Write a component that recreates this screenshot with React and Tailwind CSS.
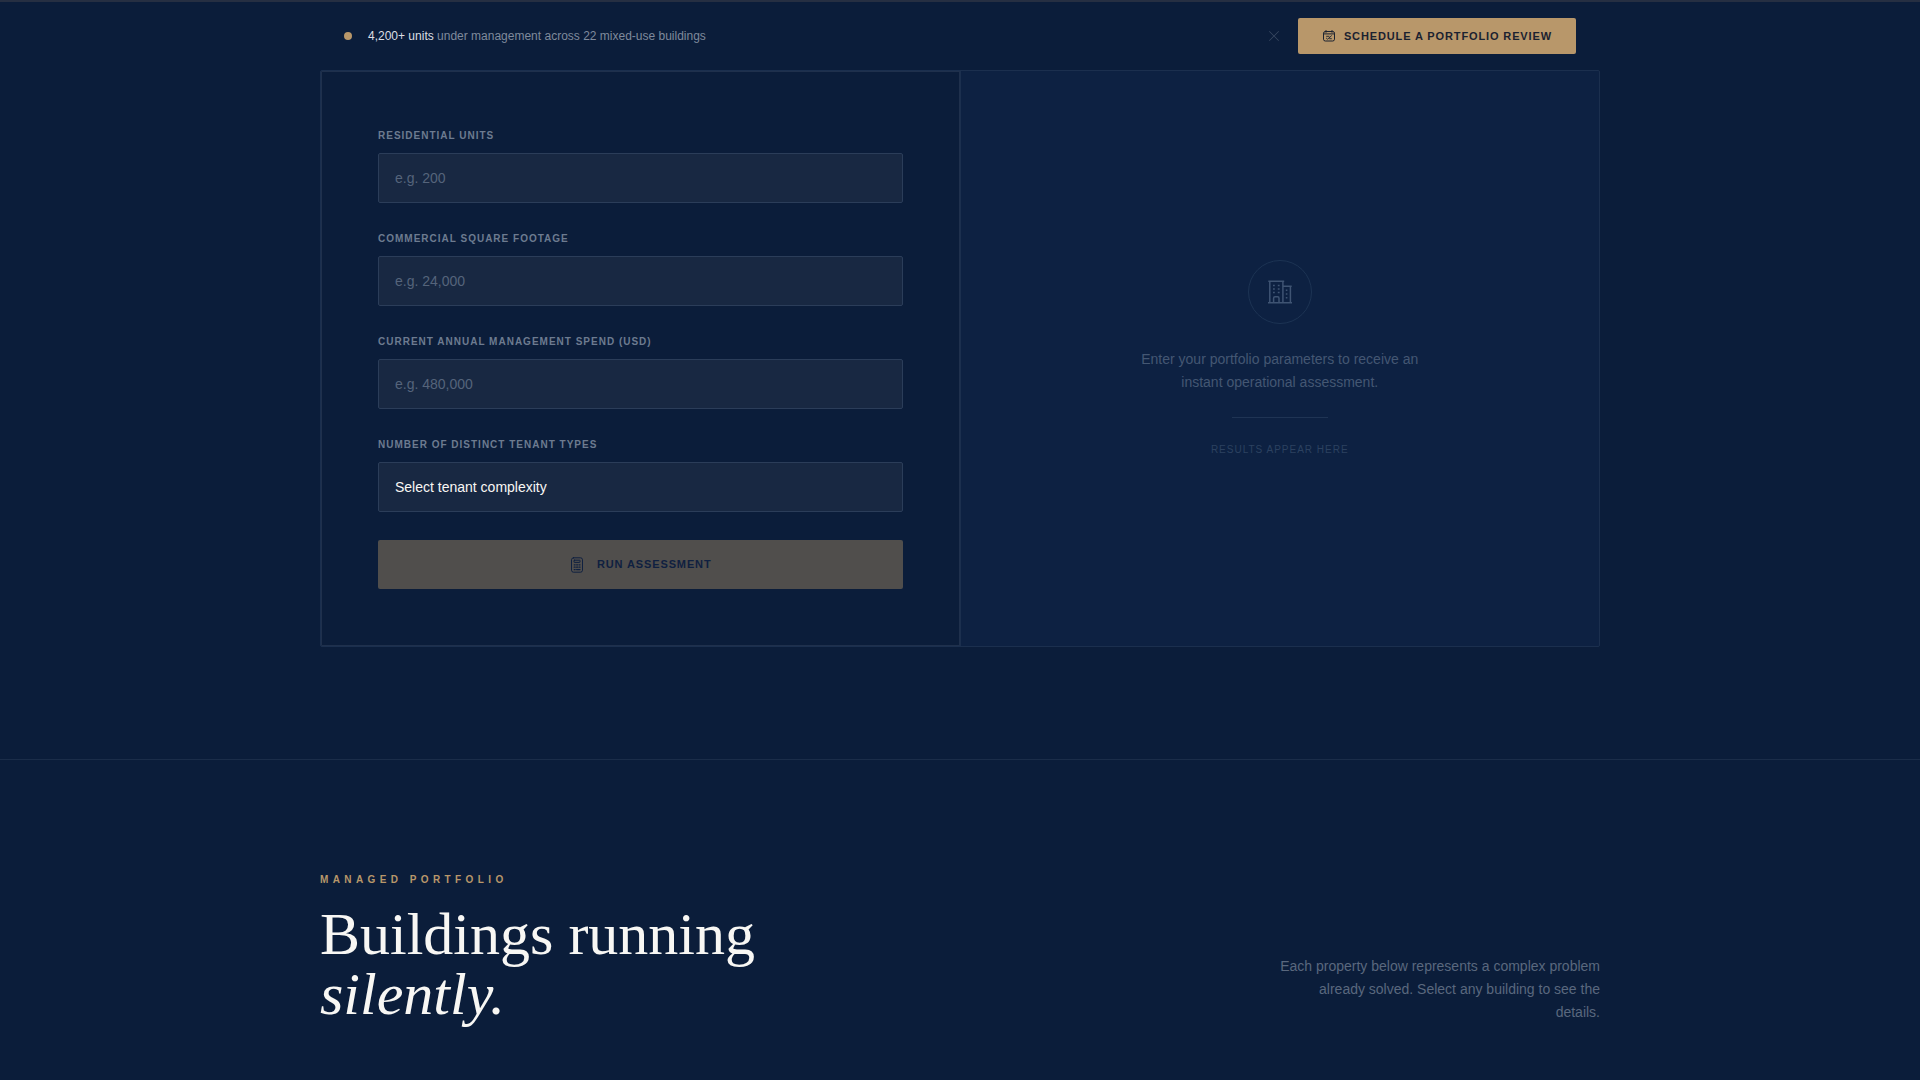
import { useState } from 'react'
import { PiXLight } from 'react-icons/pi'

const FIELDS = [
  { id: 'units', label: 'Residential Units', placeholder: 'e.g. 200' },
  { id: 'sqft', label: 'Commercial Square Footage', placeholder: 'e.g. 24,000' },
  { id: 'spend', label: 'Current Annual Management Spend (USD)', placeholder: 'e.g. 480,000' },
]

const labelClass = 'mb-[10px] block text-[10px] leading-[15px] font-semibold tracking-[1px] uppercase text-[#6d7b90]'
const fieldClass =
  'block h-[50px] w-full appearance-none rounded-[2px] border border-[#2b3d59] bg-[#182842] px-4 text-sm text-[#f8f7f4] placeholder:text-[#55647b] outline-none'

function BuildingIcon({ className }) {
  return (
    <svg viewBox="0 0 24 24" fill="none" stroke="currentColor" strokeWidth="1.5" className={className} aria-hidden="true">
      <path d="M.3 1.2h15.9M1.8 1.2v21.6M14.9 1.2v21.6M14.9 6.2h8.8M22.4 6.2v16.6M0 22.8h24" />
      <path d="M5.6 22.8v-4.6a1.4 1.4 0 0 1 1.4-1.4h2.6a1.4 1.4 0 0 1 1.4 1.4v4.6" />
      <path d="M5 5.4h1.8M9.8 5.4h1.8M5 9h1.8M9.8 9h1.8M5 12.6h1.8M9.8 12.6h1.8" />
      <path d="M17.8 10.2h1.6M17.8 14h1.6M17.8 17.8h1.6" />
    </svg>
  )
}

function CalendarIcon({ className }) {
  return (
    <svg viewBox="0 0 14 14" fill="none" stroke="currentColor" strokeLinecap="round" strokeLinejoin="round" className={className} aria-hidden="true">
      <rect x="1.5" y="2.5" width="11" height="9.5" rx="1.8" />
      <path d="M4 1.5v1.8M10 1.5v1.8M1.5 4.9h11" />
      <path d="M4.4 9.2l1.2 1 3.9-3.5M4.6 7.3h2.4M7.6 9.7h1.8" strokeWidth=".9" />
    </svg>
  )
}

function CalculatorIcon({ className }) {
  return (
    <svg viewBox="0 0 16 16" fill="none" stroke="currentColor" strokeLinecap="round" strokeLinejoin="round" className={className} aria-hidden="true">
      <rect x="2.5" y=".8" width="11" height="14.4" rx="2" />
      <rect x="5" y="3.2" width="6" height="2.2" rx=".4" />
      <path d="M5.2 7.8h1M7.6 7.8h1M10 7.8h1M5.2 10.2h1M7.6 10.2h1M10 10.2h1M5.2 12.6h1M7.6 12.6h3.4" strokeWidth="1.2" />
    </svg>
  )
}

function StickyBar({ onClose }) {
  return (
    <div className="fixed inset-x-0 top-0 z-10 border-t-2 border-[#262f42] bg-[#0b1d3a]">
      <div className="mx-auto flex h-[68px] max-w-[1280px] items-center justify-between px-6">
        <div className="flex items-center gap-4">
          <span className="size-2 rounded-full bg-[#b8976a]" />
          <p className="text-xs text-[#7f8a9c]">
            <span className="font-medium text-[#dcdfe3]">4,200+ units</span> under management across 22 mixed-use buildings
          </p>
        </div>
        <div className="flex items-center gap-4">
          <button type="button" aria-label="Dismiss" onClick={onClose} className="text-[#3a4a63]">
            <PiXLight className="size-4" />
          </button>
          <button
            type="button"
            className="flex h-9 items-center gap-2 rounded-[2px] bg-[#b8976a] px-6 text-[11px] font-semibold tracking-[0.08em] uppercase text-[#1b2230]"
          >
            <CalendarIcon className="size-[14px]" />
            Schedule a Portfolio Review
          </button>
        </div>
      </div>
    </div>
  )
}

function AssessmentForm() {
  return (
    <form className="border border-[#1f304c] bg-[#0b1d3a] p-14" onSubmit={(e) => e.preventDefault()}>
      {FIELDS.map((f) => (
        <div key={f.id} className="mb-7">
          <label htmlFor={f.id} className={labelClass}>{f.label}</label>
          <input id={f.id} type="text" placeholder={f.placeholder} className={fieldClass} />
        </div>
      ))}
      <div className="mb-7">
        <label htmlFor="tenants" className={labelClass}>Number of Distinct Tenant Types</label>
        <select id="tenants" defaultValue="" className={fieldClass}>
          <option value="">Select tenant complexity</option>
        </select>
      </div>
      <button
        type="submit"
        disabled
        className="flex h-[49px] w-full items-center justify-center gap-3 rounded-[2px] bg-[#504e4c] text-[11px] font-semibold tracking-[0.08em] uppercase text-[#0f2040]"
      >
        <CalculatorIcon className="size-4" />
        Run Assessment
      </button>
    </form>
  )
}

function ResultsPlaceholder() {
  return (
    <div className="flex flex-col items-center justify-center bg-[#0d2142] p-14 text-center">
      <div className="mb-6 flex size-16 items-center justify-center rounded-full border border-[#1c3353] text-[#3f5473]">
        <BuildingIcon className="size-6" />
      </div>
      <p className="max-w-[280px] text-sm leading-relaxed text-[#445773]">
        Enter your portfolio parameters to receive an instant operational assessment.
      </p>
      <div className="my-6 h-px w-24 bg-[#1f3454]" />
      <p className="text-[10px] leading-[15px] tracking-[1px] uppercase text-[#2c4160]">Results appear here</p>
    </div>
  )
}

export default function App() {
  const [barOpen, setBarOpen] = useState(true)

  return (
    <div className="min-h-screen bg-[#0b1d3a] font-['Liberation_Sans',sans-serif]">
      {barOpen ? <StickyBar onClose={() => setBarOpen(false)} /> : null}

      <section className="px-8 pt-[70px] pb-28">
        <div className="mx-auto grid max-w-[1280px] grid-cols-2 gap-px overflow-hidden rounded-[2px] border border-[#1b2f4e] bg-[#1b2f4e]">
          <AssessmentForm />
          <ResultsPlaceholder />
        </div>
      </section>

      <section className="border-t border-[#1b2d49] px-8 pt-28 pb-14">
        <div className="mx-auto flex max-w-[1280px] items-end justify-between">
          <div>
            <p className="mb-4 text-[10px] leading-4 font-semibold tracking-[0.44em] uppercase text-[#b8976a]">
              Managed Portfolio
            </p>
            <h2 className="font-['Liberation_Serif',serif] text-[60px] leading-[60px] text-[#f8f7f4]">
              Buildings running
              <br />
              <em>silently.</em>
            </h2>
          </div>
          <p className="max-w-[320px] text-right text-sm leading-[23px] text-[#5a687e]">
            Each property below represents a complex problem already solved. Select any building to see the details.
          </p>
        </div>
      </section>
    </div>
  )
}
